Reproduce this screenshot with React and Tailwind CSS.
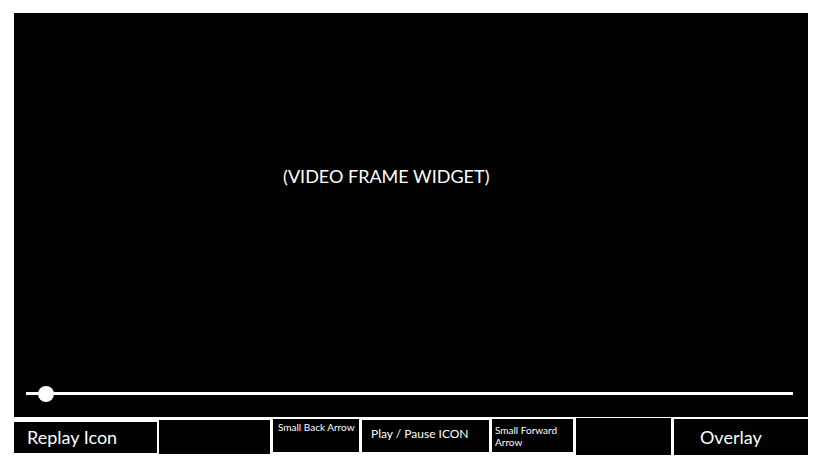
export default function App() {
  const font = { fontFamily: "Lato, 'Open Sans', sans-serif" };
  return (
    <div className="w-[819px] h-[460px] bg-white overflow-hidden" style={font}>
      <div className="pt-[13px] pl-[14px]">
        <div className="w-[794px] h-[404px] bg-black flex flex-col">
          <div className="pt-[153px] pl-[269px] text-white text-[18px] leading-[1.2]">
            (VIDEO FRAME WIDGET)
          </div>
          <div className="mt-auto mb-[22px] ml-[12px] w-[767px] h-[3px] bg-white relative">
            <div className="absolute left-[12px] top-[-6px] w-[16px] h-[16px] rounded-full bg-white" />
          </div>
        </div>
        <div className="flex items-start text-white">
          <div className="mt-[5px] w-[143px] h-[31px] bg-black pl-[13px] pt-[5px] text-[18px] leading-[1.2]">
            Replay Icon
          </div>
          <div className="ml-[2px] mt-[3px] w-[111px] h-[34px] bg-black" />
          <div className="ml-[3px] mt-[2px] w-[86px] h-[33px] bg-black pl-[5px] pt-[2px] text-[10px] leading-[1.2] whitespace-nowrap">
            Small Back Arrow
          </div>
          <div className="ml-[3px] mt-[3px] w-[127px] h-[32px] bg-black pl-[9px] pt-[7px] text-[12px] leading-[1.2] whitespace-nowrap">
            Play / Pause ICON
          </div>
          <div className="ml-[3px] mt-[2px] w-[81px] h-[33px] bg-black pl-[3px] pt-[5px] text-[10px] leading-[12px]">
            Small Forward
            <br />
            Arrow
          </div>
          <div className="ml-[3px] mt-[1px] w-[95px] h-[37px] bg-black" />
          <div className="ml-[3px] mt-[2px] w-[134px] h-[36px] bg-black pl-[26px] pt-[8px] text-[18px] leading-[1.2]">
            Overlay
          </div>
        </div>
      </div>
    </div>
  );
}
